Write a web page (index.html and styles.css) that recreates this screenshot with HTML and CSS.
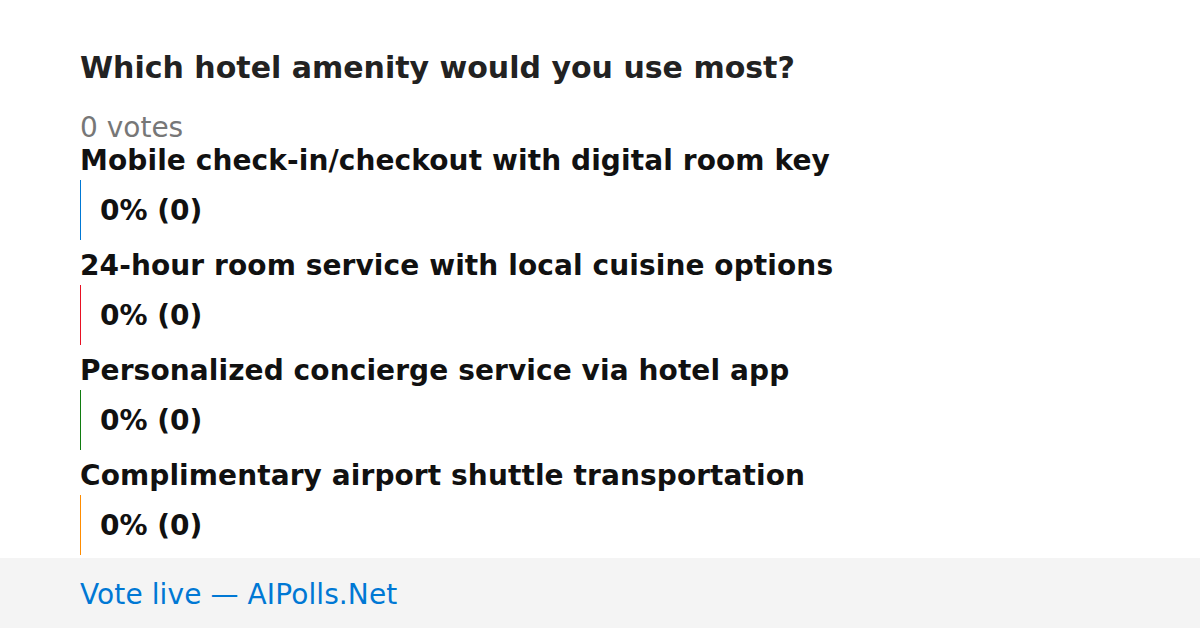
FILE: index.html
```html
<!DOCTYPE html>
<html lang="en">
<head>
    <meta charset="UTF-8">
    <title>Poll</title>
    <link rel="stylesheet" href="styles.css">
</head>
<body>
    <main class="poll">
        <h1 class="question">Which hotel amenity would you use most?</h1>
        <div class="total">0 votes</div>
        <div class="option">
            <div class="label">Mobile check-in/checkout with digital room key</div>
            <div class="bar blue">0% (0)</div>
        </div>
        <div class="option">
            <div class="label">24-hour room service with local cuisine options</div>
            <div class="bar red">0% (0)</div>
        </div>
        <div class="option">
            <div class="label">Personalized concierge service via hotel app</div>
            <div class="bar green">0% (0)</div>
        </div>
        <div class="option">
            <div class="label">Complimentary airport shuttle transportation</div>
            <div class="bar orange">0% (0)</div>
        </div>
    </main>
    <footer class="footer">
        <a href="#">Vote live — AIPolls.Net</a>
    </footer>
</body>
</html>
```

FILE: styles.css
```css
html, body { margin: 0; padding: 0; }
body {
    font-family: "DejaVu Sans", sans-serif;
    background: #fff;
    width: 1200px;
    height: 628px;
    overflow: hidden;
}
.poll { height: 558px; box-sizing: border-box; padding: 50px 80px 0; overflow: hidden; }
.question { margin: 0 0 26px; font-size: 30px; line-height: 36px; color: #222; }
.total { font-size: 28px; line-height: 31px; color: #777; }
.option { margin-bottom: 8px; }
.option:last-child { margin-bottom: 0; }
.label { padding-top: 2px; font-size: 28px; font-weight: bold; line-height: 32px; letter-spacing: 0.1px; color: #111; }
.bar {
    height: 60px;
    margin-top: 3px;
    padding-left: 19px;
    border-left: 1px solid;
    display: flex;
    align-items: center;
    font-size: 28px;
    font-weight: bold;
    color: #111;
}
.bar.blue { border-color: #0078d4; }
.bar.red { border-color: #e81123; }
.bar.green { border-color: #107c10; }
.bar.orange { border-color: #ff8c00; }
.footer { height: 70px; box-sizing: border-box; padding: 3px 80px 0; background: #f4f4f4; display: flex; align-items: center; }
.footer a { font-size: 28px; letter-spacing: 0.1px; color: #0078d4; text-decoration: none; }
```
